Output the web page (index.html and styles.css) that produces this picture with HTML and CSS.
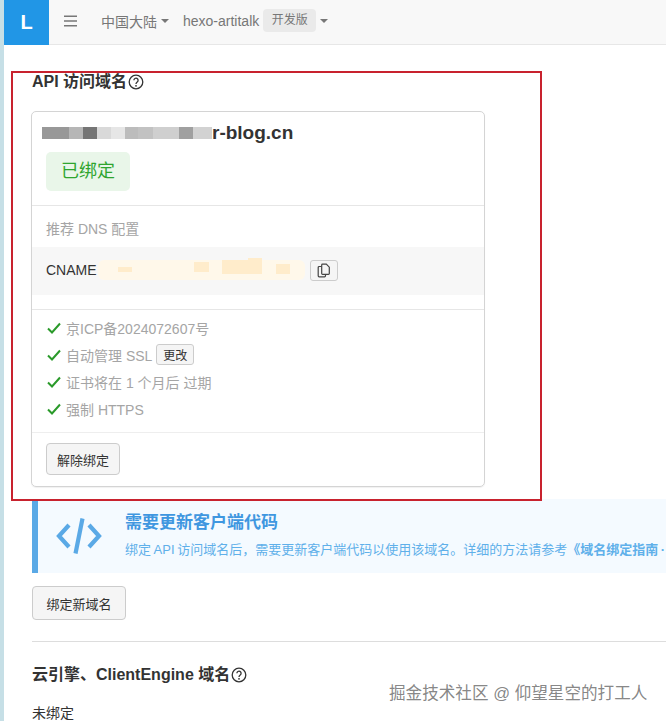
FILE: index.html
```html
<!DOCTYPE html>
<html lang="zh-CN">
<head>
<meta charset="utf-8">
<title>API 访问域名</title>
<link rel="stylesheet" href="styles.css">
</head>
<body>
<div class="app">
  <header class="topbar">
    <div class="logo">L</div>
    <svg class="burger" width="14" height="12" viewBox="0 0 14 12"><path d="M0 1.2h13M0 6h13M0 10.8h13" stroke="#777" stroke-width="1.5" fill="none"/></svg>
    <span class="nav-item">中国大陆<i class="caret"></i></span>
    <span class="nav-item app-name">hexo-artitalk</span>
    <span class="tag">开发版</span>
    <i class="caret caret-app"></i>
  </header>
  <main class="content">
    <h3 class="section-title section-first">API 访问域名<svg class="help" viewBox="0 0 16 16"><circle cx="8" cy="8" r="6.8" fill="none" stroke="#333" stroke-width="1.3"/><path d="M5.9 6.3a2.1 2.1 0 1 1 3.3 1.7c-.8.6-1.2 1-1.2 1.9" fill="none" stroke="#333" stroke-width="1.3"/><circle cx="8" cy="11.8" r=".9" fill="#333"/></svg></h3>
    <section class="card">
      <div class="card-head">
        <div class="domain">
          <span class="mosaic">
            <i class="m1"></i><i class="m2"></i><i class="m3"></i><i class="m4"></i><i class="m5"></i><i class="m6"></i><i class="m7"></i><i class="m8"></i><i class="m9"></i><i class="m10"></i>
          </span><span>r-blog.cn</span>
        </div>
        <span class="badge">已绑定</span>
      </div>
      <div class="dns">
        <div class="dns-label">推荐 DNS 配置</div>
        <div class="dns-row">
          <span>CNAME</span>
          <span class="smudge"><i class="s1"></i><i class="s2"></i><i class="s3"></i><i class="s4"></i><i class="s5"></i></span>
          <button class="copy" type="button" aria-label="复制"><svg width="14" height="15" viewBox="0 0 14 15"><path d="M4.5 3.5H2.2a1 1 0 0 0-1 1v8.3a1 1 0 0 0 1 1h5.3a1 1 0 0 0 1-1v-1.3" fill="none" stroke="#444" stroke-width="1.2"/><path d="M5.5 1.2h3.8l3 3v6.3a.8.8 0 0 1-.8.8h-6a.8.8 0 0 1-.8-.8V2a.8.8 0 0 1 .8-.8z" fill="none" stroke="#444" stroke-width="1.2"/></svg></button>
        </div>
      </div>
      <ul class="checks">
        <li><svg class="tick" viewBox="0 0 14 12"><path d="M1 6.5l4 4L13 1.5" fill="none" stroke="#2a9a2a" stroke-width="2"/></svg>京ICP备2024072607号</li>
        <li><svg class="tick" viewBox="0 0 14 12"><path d="M1 6.5l4 4L13 1.5" fill="none" stroke="#2a9a2a" stroke-width="2"/></svg>自动管理 SSL<button class="btn-xs" type="button">更改</button></li>
        <li><svg class="tick" viewBox="0 0 14 12"><path d="M1 6.5l4 4L13 1.5" fill="none" stroke="#2a9a2a" stroke-width="2"/></svg>证书将在 1 个月后 过期</li>
        <li><svg class="tick" viewBox="0 0 14 12"><path d="M1 6.5l4 4L13 1.5" fill="none" stroke="#2a9a2a" stroke-width="2"/></svg>强制 HTTPS</li>
      </ul>
      <div class="card-foot"><button class="btn" type="button">解除绑定</button></div>
    </section>
    <aside class="callout">
      <svg class="code-icon" width="46" height="40" viewBox="0 0 46 40"><path d="M13 9L3 20l10 11M33 9l10 11-10 11M26.500 2.500L19.500 37.500" fill="none" stroke="#5aa9e6" stroke-width="4.200"/></svg>
      <div class="callout-body">
        <div class="callout-title">需要更新客户端代码</div>
        <div class="callout-text">绑定 API 访问域名后，需要更新客户端代码以使用该域名。详细的方法请参考<b>《域名绑定指南 ·</b></div>
      </div>
    </aside>
    <button class="btn btn-new" type="button">绑定新域名</button>
    <hr class="rule">
    <h3 class="section-title">云引擎、ClientEngine 域名<svg class="help" viewBox="0 0 16 16"><circle cx="8" cy="8" r="6.8" fill="none" stroke="#333" stroke-width="1.3"/><path d="M5.900 6.300a2.100 2.100 0 1 1 3.300 1.700c-.8.6-1.200 1-1.200 1.900" fill="none" stroke="#333" stroke-width="1.3"/><circle cx="8" cy="11.800" r=".9" fill="#333"/></svg></h3>
    <p class="unbound">未绑定</p>
  </main>
</div>
<div class="annotation"></div>
<div class="watermark">掘金技术社区 @ 仰望星空的打工人</div>
</body>
</html>
```
FILE: styles.css
```css
* { box-sizing: border-box; }
html, body { margin: 0; height: 721px; overflow: hidden; background: #fff; }
body {
  position: relative;
  font-family: "Liberation Sans", "Noto Sans CJK SC", sans-serif;
  font-size: 14px;
  color: #333;
  border-left: 4px solid #c6dfe6;
}
.app { width: 662px; height: 721px; overflow: hidden; }

.topbar {
  display: flex;
  align-items: center;
  height: 45px;
  background: #f8f8f8;
  border-bottom: 1px solid #e7e7e7;
  color: #777;
  font-size: 14px;
}
.logo {
  width: 45px;
  height: 45px;
  background: #2196e6;
  color: #fff;
  font-size: 20px;
  font-weight: 700;
  display: flex;
  align-items: center;
  justify-content: center;
}
.burger { margin: 0 23px 3px 15px; }
.nav-item { display: inline-flex; align-items: center; margin-bottom: 3px; }
.app-name { margin-left: 14px; }
.caret {
  display: inline-block;
  width: 0;
  height: 0;
  margin-left: 4px;
  border-top: 4px solid #777;
  border-left: 4px solid transparent;
  border-right: 4px solid transparent;
}
.caret-app { margin-left: 4px; margin-bottom: 3px; }
.tag {
  margin: 0 0 3px 4px;
  width: 53px;
  text-align: center;
  height: 23px;
  line-height: 23px;
  background: #eaeaea;
  border-radius: 4px;
  font-size: 12px;
}

.content { padding: 0 0 0 28px; width: 900px; }
.section-title {
  margin: 0;
  display: flex;
  align-items: center;
  font-size: 16px;
  line-height: 22px;
  font-weight: 700;
  color: #333;
}
.section-first { margin-top: 26px; }
.help { width: 16px; height: 16px; margin-left: 1px; }

.card {
  width: 454px;
  height: 376px;
  margin-top: 18px;
  margin-left: -1px;
  border: 1px solid #d4d4d4;
  border-radius: 5px;
  box-shadow: 0 1px 1px rgba(0,0,0,.06);
  display: flex;
  flex-direction: column;
}
.card-head { padding: 10px 14px 0; height: 94px; border-bottom: 1px solid #e6e6e6; }
.domain {
  display: flex;
  align-items: center;
  height: 22px;
  font-size: 19px;
  font-weight: 700;
  line-height: 22px;
  color: #333;
}
.mosaic { display: flex; height: 12px; margin-left: -4px; }
.mosaic i { display: block; height: 12px; }
.m1 { width: 27px; background: #989898; }
.m2 { width: 14px; background: #b6b6b6; }
.m3 { width: 14px; background: #757575; }
.m4 { width: 14px; background: #d9d9d9; }
.m5 { width: 14px; background: #e6e6e6; }
.m6 { width: 13px; background: #bcbcbc; }
.m7 { width: 15px; background: #c2c2c2; }
.m8 { width: 26px; background: #cfcfcf; }
.m9 { width: 14px; background: #a0a0a0; }
.m10 { width: 19px; background: #d2d2d2; }
.badge {
  display: inline-block;
  margin-top: 8px;
  width: 84px;
  height: 39px;
  line-height: 38px;
  text-align: center;
  background: #e9f6e9;
  border-radius: 5px;
  color: #2fa52f;
  font-size: 18px;
}
.dns { height: 104px; border-bottom: 1px solid #e6e6e6; }
.dns-label { height: 41px; padding: 14px 14px 0; line-height: 19px; font-size: 14px; color: #a5a5a5; }
.dns-row {
  display: flex;
  align-items: center;
  height: 48px;
  padding: 0 0 2px 14px;
  background: #f7f7f7;
  font-size: 14px;
  color: #333;
}
.smudge { display: block; position: relative; width: 207px; height: 20px; margin-left: 1px; background: #fff8ea; border-radius: 6px; }
.smudge i { position: absolute; display: block; background: #ffeccb; }
.s1 { left: 20px; top: 7px; width: 14px; height: 5px; }
.s2 { left: 96px; top: 2px; width: 15px; height: 10px; }
.s3 { left: 124px; top: 0; width: 40px; height: 14px; }
.s4 { left: 150px; top: -2px; width: 14px; height: 7px; background: #ffe4b5; }
.s5 { left: 178px; top: 4px; width: 14px; height: 10px; }
.copy {
  margin-left: 5px;
  width: 28px;
  height: 21px;
  padding: 0;
  display: flex;
  align-items: center;
  justify-content: center;
  background: #f5f5f5;
  border: 1px solid #ccc;
  border-radius: 3px;
}
.checks {
  list-style: none;
  margin: 0;
  padding: 4px 14px 9px;
  height: 123px;
  border-bottom: 1px solid #eee;
  font-size: 14px;
  color: #a5a5a5;
}
.checks li { display: flex; align-items: center; height: 27px; }
.tick { width: 14px; height: 12px; margin-left: 1px; margin-right: 5px; }
.btn-xs {
  margin-left: 4px;
  width: 38px;
  height: 21px;
  padding: 0;
  font: inherit;
  font-size: 12px;
  color: #333;
  background: #f5f5f5;
  border: 1px solid #ccc;
  border-radius: 3px;
}
.card-foot { padding: 10px 14px; }
.btn {
  height: 32px;
  width: 74px;
  padding: 0;
  font: inherit;
  font-size: 13px;
  color: #333;
  background: #f5f5f5;
  border: 1px solid #ccc;
  border-radius: 4px;
}
.callout {
  display: flex;
  align-items: center;
  height: 74px;
  margin-top: 12px;
  background: #f4faff;
  border-left: 6px solid #5aa9e6;
}
.code-icon { margin-left: 18px; margin-right: 23px; }
.callout-title { font-size: 17px; font-weight: 700; line-height: 22px; color: #3f97e0; }
.callout-text { margin-top: 6px; font-size: 13px; line-height: 20px; color: #5fb0ea; white-space: nowrap; word-spacing: -1px; }
.callout-text b { font-weight: 700; }
.btn-new { display: block; width: 94px; height: 34px; margin-top: 13px; }
.rule { width: 700px; margin: 21px 0 0; border: 0; border-top: 1px solid #ddd; }
.content .rule + .section-title { margin-top: 22px; }
.unbound { margin: 17px 0 0; font-size: 14px; line-height: 20px; color: #333; }

.annotation {
  position: absolute;
  left: 7px;
  top: 71px;
  width: 531px;
  height: 430px;
  border: 2px solid #c8222e;
}
.watermark {
  position: absolute;
  left: 385px;
  top: 683px;
  font-size: 16.6px;
  line-height: 22px;
  color: rgba(120,120,120,.9);
  text-shadow: 0 0 1px #fff;
}
```
